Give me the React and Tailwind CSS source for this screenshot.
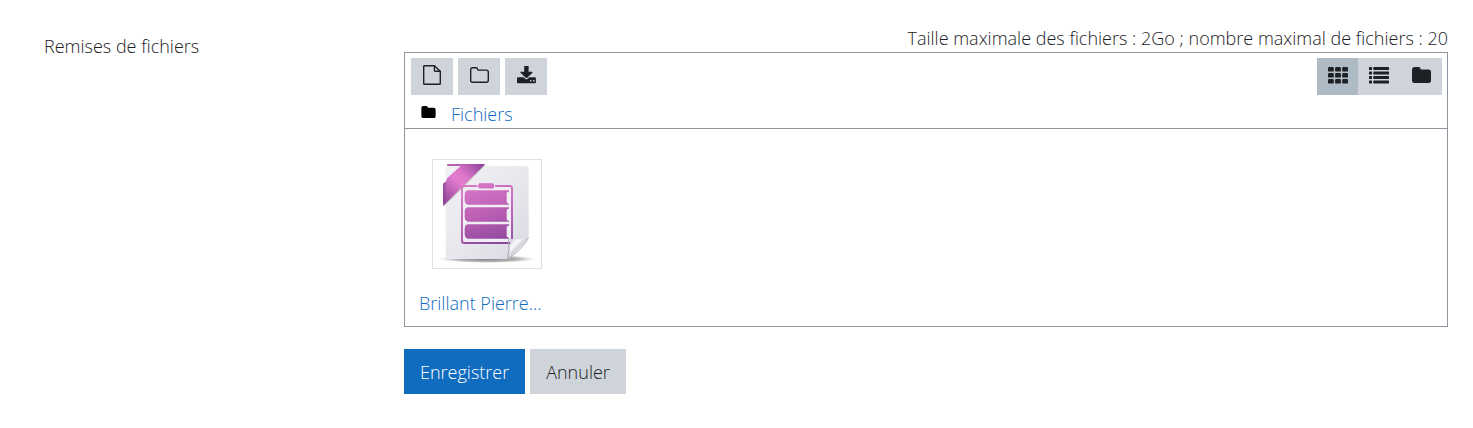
import React from "react";

function FileIcon() {
  return (
    <svg width="18" height="20" viewBox="0 0 18 20" fill="none" stroke="currentColor" strokeWidth="1.4" strokeLinejoin="round" aria-hidden="true">
      <path d="M1.4.7H11.4l5.9 5.6v12.2q0 .8-.8.8H1.5q-.8 0-.8-.8V1.4q0-.7.7-.7Z" />
      <path d="M11.4 .7v4.9q0 .7.7.7h5.2" />
    </svg>
  );
}

function FolderOutlineIcon() {
  return (
    <svg width="19" height="16" viewBox="0 0 19 16" fill="none" stroke="currentColor" strokeWidth="1.4" strokeLinejoin="round" aria-hidden="true">
      <path d="M2.7.8h3.3Q7.6.8 7.6 2.4q0 .7.8.7h7.9q2 0 2 2v8.1q0 2-2 2H2.7q-2 0-2-2V2.8q0-2 2-2Z" />
    </svg>
  );
}

function DownloadIcon() {
  return (
    <svg width="19" height="18" viewBox="0 0 19 18" fill="currentColor" aria-hidden="true">
      <path d="M7.2 0h4.4v5.8h3.5q.8.2.3.9L10 11.9q-.5.4-1 0L3.5 6.7q-.5-.7.3-.9h3.4Z" />
      <path fillRule="evenodd" d="M1 11.3h5.6l1.5 1.5q1.3 1.1 2.6 0l1.5-1.5h5.7q1 0 1 1v4q0 1-1 1H1q-1 0-1-1v-4q0-1 1-1Zm12 2.7v1.4h1.4v-1.4Zm3 0v1.4h1.4v-1.4Z" />
    </svg>
  );
}

function GridIcon() {
  return (
    <svg width="20" height="17" viewBox="0 0 20 17" fill="currentColor" aria-hidden="true">
      {[0, 7.1, 14.2].map((x) =>
        [0, 6, 12].map((y) => <rect key={`${x}-${y}`} x={x} y={y} width="5.8" height="4.6" rx="1.2" />)
      )}
    </svg>
  );
}

function ListIcon() {
  return (
    <svg width="20" height="17" viewBox="0 0 20 17" fill="currentColor" aria-hidden="true">
      {[0, 4.5, 9, 13.5].map((y) => (
        <g key={y}>
          <rect x="0" y={y} width="3" height="3" rx=".5" />
          <rect x="4.3" y={y} width="15.7" height="3" rx=".5" />
        </g>
      ))}
    </svg>
  );
}

function FolderIcon({ className }) {
  return (
    <svg className={className} viewBox="0 0 19 16" fill="currentColor" aria-hidden="true">
      <path d="M2.4 0h4Q8.7 0 8.7 2.4h7.8Q19 2.4 19 4.9v8.6q0 2.5-2.5 2.5H2.4Q0 16 0 13.5v-11Q0 0 2.4 0Z" />
    </svg>
  );
}

function ArchiveThumbnail() {
  return (
    <svg className="block h-27 w-27" viewBox="24 30 324 324" role="img" aria-label="Archive">
      <defs>
        <linearGradient id="page" x1="0" y1="0" x2="1" y2="1">
          <stop offset="0" stopColor="#f1f1f5" />
          <stop offset=".5" stopColor="#e8e8ee" />
          <stop offset="1" stopColor="#d8d8e1" />
        </linearGradient>
        <linearGradient id="ribbon" gradientUnits="userSpaceOnUse" x1="55" y1="150" x2="165" y2="40">
          <stop offset="0" stopColor="#92479c" />
          <stop offset=".45" stopColor="#e47bcf" />
          <stop offset=".62" stopColor="#dd77c8" />
          <stop offset="1" stopColor="#8f459d" />
        </linearGradient>
        <linearGradient id="books" gradientUnits="userSpaceOnUse" x1="150" y1="100" x2="205" y2="285">
          <stop offset="0" stopColor="#d978c8" />
          <stop offset=".5" stopColor="#bc60b4" />
          <stop offset="1" stopColor="#8c489c" />
        </linearGradient>
        <linearGradient id="fold" gradientUnits="userSpaceOnUse" x1="250" y1="268" x2="285" y2="302">
          <stop offset="0" stopColor="#c5c5cb" />
          <stop offset=".5" stopColor="#fbfbfd" />
          <stop offset=".78" stopColor="#d0d0d6" />
          <stop offset="1" stopColor="#f4f4f6" />
        </linearGradient>
        <radialGradient id="shade">
          <stop offset="0" stopColor="#555" stopOpacity=".75" />
          <stop offset=".65" stopColor="#777" stopOpacity=".55" />
          <stop offset="1" stopColor="#999" stopOpacity="0" />
        </radialGradient>
      </defs>
      <ellipse cx="187" cy="327" rx="144" ry="12" fill="url(#shade)" />
      <path d="M70 48H302q9 0 9 9v208q-27 36-63 62H70q-8 0-8-8V56q0-8 8-8Z" fill="url(#page)" />
      <rect x="111" y="108" width="150" height="171" rx="7" fill="#f0eef5" stroke="url(#books)" strokeWidth="5.5" />
      <rect x="158" y="98" width="51" height="19" rx="7" fill="url(#books)" stroke="#f0eef5" strokeWidth="3" />
      <g fill="url(#books)">
        <path d="M128 121H252v4q-7 0-7 5v26q0 5 7 5v3H128q-9-3-9-13v-17q0-11 9-13Z" />
        <path d="M128 172H252v4q-7 0-7 5v26q0 5 7 5v3H128q-9-3-9-13v-17q0-11 9-13Z" />
        <path d="M128 223H252v4q-7 0-7 5v26q0 5 7 5v3H128q-9-3-9-13v-17q0-11 9-13Z" />
      </g>
      <path d="M247 327q12-29 8-61 29 6 56-3-21 38-64 64Z" fill="url(#fold)" />
      <path d="M247 327q8-29 4-59" fill="none" stroke="#aaaab2" strokeWidth="3" />
      <path d="M247 327q43-25 64-64" fill="none" stroke="#a5a5a9" strokeWidth="2" />
      <path d="M181 46 56 170V154L164 46Z" fill="#666" opacity=".3" />
      <path d="M66 42H181L54 168V101q12-4 12-16l41-37Z" fill="url(#ribbon)" />
      <path d="M66 42H112L107 48H67Z" fill="#b763b2" />
      <path d="M54 101 61 94V153L54 167Z" fill="#8d4597" opacity=".6" />
    </svg>
  );
}

const tools = [
  { label: "Ajouter", Icon: FileIcon },
  { label: "Créer un dossier", Icon: FolderOutlineIcon },
  { label: "Télécharger", Icon: DownloadIcon },
];

export default function App() {
  return (
    <form
      className="bg-white pt-6 pr-[25px] pb-8 pl-11 font-['Open_Sans','Noto_Sans',sans-serif] text-lg leading-7 font-[350] text-[#1d2125]"
      onSubmit={(e) => e.preventDefault()}
    >
      <div className="grid grid-cols-[minmax(0,1fr)_minmax(0,2.9fr)]">
        <div id="files-label" className="pt-2">Remises de fichiers</div>
        <div>
          <p className="text-right">Taille maximale des fichiers : 2Go ; nombre maximal de fichiers : 20</p>
          <section aria-labelledby="files-label" className="border border-[#8f959e]">
            <header className="border-b border-[#8f959e]">
              <div className="flex justify-between pr-[5px] pl-1.5 pt-[5px]">
                <div className="flex gap-[5px]">
                  {tools.map(({ label, Icon }) => (
                    <button key={label} type="button" aria-label={label} className="flex h-[37px] w-[42px] items-center justify-center bg-[#ced4da] pb-[3px]">
                      <Icon />
                    </button>
                  ))}
                </div>
                <div className="flex">
                  <button type="button" aria-label="Icônes" aria-pressed="true" className="flex h-[37px] w-[41px] items-center justify-center bg-[#afbbc4] pb-[3px]">
                    <GridIcon />
                  </button>
                  <button type="button" aria-label="Liste" aria-pressed="false" className="flex h-[37px] w-[42px] items-center justify-center bg-[#ced4da] pb-[3px]">
                    <ListIcon />
                  </button>
                  <button type="button" aria-label="Arborescence" aria-pressed="false" className="flex h-[37px] w-[42px] items-center justify-center bg-[#ced4da] pb-[3px]">
                    <FolderIcon className="h-4 w-[19px]" />
                  </button>
                </div>
              </div>
              <nav aria-label="Chemin" className="flex items-center gap-[15px] px-4 pt-[5px]">
                <FolderIcon className="mb-1 h-3 w-[15px] text-black" />
                <a href="#fichiers" className="text-[#0f6cbf]">Fichiers</a>
              </nav>
            </header>
            <div className="px-[14px] pt-[30px] pb-[9px]">
              <a href="#brillant-pierre" className="inline-flex flex-col items-end gap-5 text-[#0f6cbf]">
                <span className="border border-[#dee2e6]">
                  <ArchiveThumbnail />
                </span>
                <span>Brillant Pierre...</span>
              </a>
            </div>
          </section>
          <div className="mt-[22px] flex gap-[5px]">
            <button type="submit" className="h-[45px] bg-[#0f6cbf] px-4 text-white">Enregistrer</button>
            <button type="button" className="h-[45px] bg-[#ced4da] px-4">Annuler</button>
          </div>
        </div>
      </div>
    </form>
  );
}
